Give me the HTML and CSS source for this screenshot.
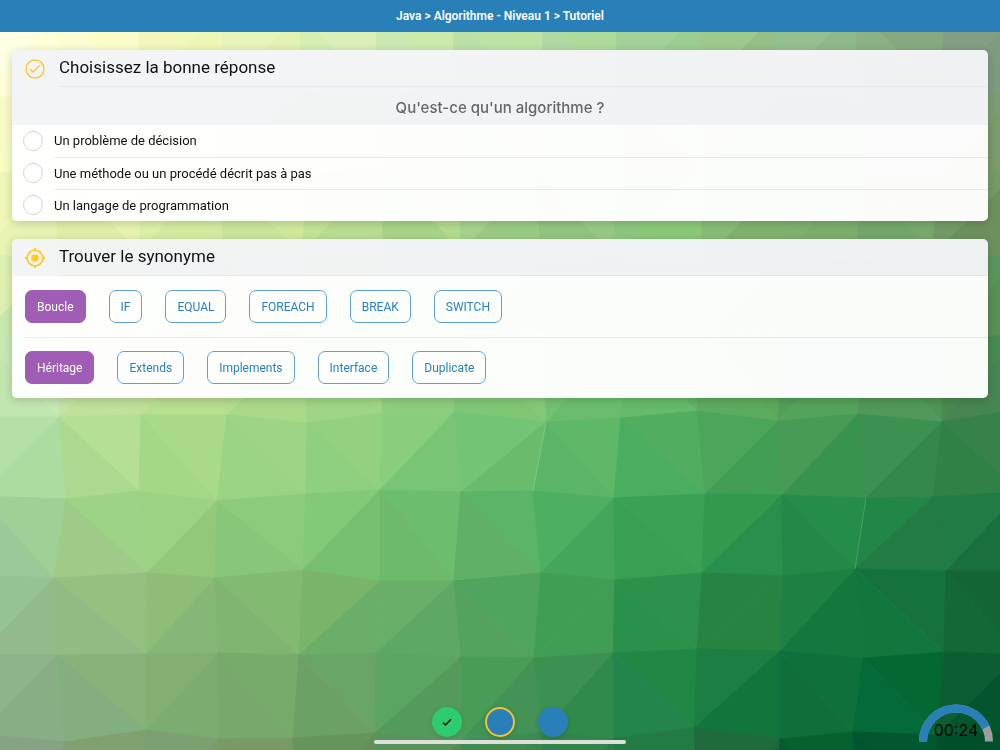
FILE: index.html
```
<!DOCTYPE html>
<html lang="fr">
<head>
  <meta charset="UTF-8" />
  <meta name="viewport" content="width=device-width, initial-scale=1.0" />
  <title>Java - Algorithme - Tutoriel</title>
  <link rel="stylesheet" href="styles.css">
</head>
<body>
  <svg class="background" id="background" viewBox="0 0 1000 750" preserveAspectRatio="xMidYMid slice" aria-hidden="true"></svg>

  <header class="toolbar">
    <h1>Java &gt; Algorithme - Niveau 1 &gt; Tutoriel</h1>
  </header>

  <main class="content">
    <section class="card">
      <div class="card-head">
        <svg class="icon" viewBox="0 0 20 20" aria-hidden="true">
          <circle cx="10" cy="10" r="9" fill="none" stroke="#ffca3a" stroke-width="1.5" />
          <path d="M5.6 10.6 L8.2 13 L14.2 6.8" fill="none" stroke="#ffca3a" stroke-width="1.5" stroke-linecap="round" stroke-linejoin="round" />
        </svg>
        <h2>Choisissez la bonne réponse</h2>
      </div>
      <p class="question" id="question">Qu'est-ce qu'un algorithme ?</p>
      <div class="answers" role="radiogroup" aria-labelledby="question">
        <div class="answer">
          <input type="radio" name="answer" id="a1">
          <label for="a1">Un problème de décision</label>
        </div>
        <div class="answer">
          <input type="radio" name="answer" id="a2">
          <label for="a2">Une méthode ou un procédé décrit pas à pas</label>
        </div>
        <div class="answer">
          <input type="radio" name="answer" id="a3">
          <label for="a3">Un langage de programmation</label>
        </div>
      </div>
    </section>

    <section class="card">
      <div class="card-head">
        <svg class="icon" viewBox="0 0 20 20" aria-hidden="true">
          <circle cx="10" cy="10" r="7.8" fill="none" stroke="#ffca22" stroke-width="1.8" />
          <circle cx="10" cy="10" r="3.8" fill="#ffca22" />
          <path d="M10 0 V3 M10 17 V20 M0 10 H3 M17 10 H20" stroke="#ffca22" stroke-width="1.8" />
        </svg>
        <h2>Trouver le synonyme</h2>
      </div>
      <div class="word-list">
        <div class="words">
          <span class="chip word">Boucle</span>
          <button class="chip">IF</button>
          <button class="chip">EQUAL</button>
          <button class="chip">FOREACH</button>
          <button class="chip">BREAK</button>
          <button class="chip">SWITCH</button>
        </div>
        <div class="words">
          <span class="chip word">Héritage</span>
          <button class="chip">Extends</button>
          <button class="chip">Implements</button>
          <button class="chip">Interface</button>
          <button class="chip">Duplicate</button>
        </div>
      </div>
    </section>
  </main>

  <footer class="footer">
    <div class="progress">
      <div class="steps">
        <button class="step done" aria-label="Étape 1">
          <svg viewBox="0 0 10 10" aria-hidden="true">
            <path d="M1 5.6 L3.4 8 L9 2.2" fill="none" stroke="#000" stroke-width="1.4" />
          </svg>
        </button>
        <button class="step current" aria-label="Étape 2"></button>
        <button class="step" aria-label="Étape 3"></button>
      </div>
      <div class="home-bar"></div>
    </div>
    <div class="timer">
      <svg viewBox="0 0 74 40" aria-hidden="true">
        <path d="M4 37.500 A33 33 0 0 1 70 37.500" fill="none" stroke="#9e9e9e" stroke-width="8" />
        <path d="M4 37.500 A33 33 0 0 1 66.900 23.500" fill="none" stroke="#2980b9" stroke-width="8" />
      </svg>
      <span>00:24</span>
    </div>
  </footer>

  <script src="background.js"></script>
</body>
</html>
```

FILE: styles.css
```
:root {
  --primary: #2980b9;
  --purple: #9f5db5;
  --green: #2ecc71;
  --yellow: #f1c232;
  --line: rgba(0, 0, 0, 0.08);
  --font: Roboto, 'Liberation Sans', sans-serif;
}

* {
  box-sizing: border-box;
  margin: 0;
  padding: 0;
}

body {
  font-family: var(--font);
  color: #111;
  min-height: 100vh;
  display: flex;
  flex-direction: column;
}

button {
  font-family: inherit;
  cursor: pointer;
}

.background {
  position: fixed;
  inset: 0;
  width: 100%;
  height: 100%;
  z-index: -1;
}

.toolbar {
  height: 32px;
  background: var(--primary);
  color: white;
  display: flex;
  align-items: center;
  justify-content: center;
}

.toolbar h1 {
  font-size: 12px;
  font-weight: 600;
}

.content {
  padding: 18px 12px;
  display: flex;
  flex-direction: column;
  gap: 18px;
}

.card {
  border-radius: 5px;
  overflow: hidden;
  box-shadow: 0 2px 10px rgba(0, 0, 0, 0.18);
}

.card-head {
  display: flex;
  align-items: center;
  gap: 14px;
  padding-left: 13px;
  background: rgba(243, 244, 247, 0.97);
}

.icon {
  width: 20px;
  height: 20px;
}

.card-head h2 {
  flex: 1;
  font-size: 17px;
  font-weight: 400;
  line-height: 35px;
  padding-bottom: 1px;
  border-bottom: 1px solid rgba(0, 0, 0, 0.04);
}

.question {
  background: rgba(243, 244, 247, 0.97);
  color: #666;
  font-family: Inter, sans-serif;
  font-size: 15px;
  font-weight: 500;
  line-height: 38px;
  height: 38px;
  padding-top: 2px;
  text-align: center;
}

.answers {
  background: rgba(255, 255, 255, 0.97);
}

.answer {
  display: flex;
  align-items: center;
  gap: 11px;
  padding-left: 11px;
}

.answer input {
  appearance: none;
  width: 20px;
  height: 20px;
  border: 1px solid #d2d2d2;
  border-radius: 50%;
  background: white;
}

.answer input:checked {
  background: var(--primary);
}

.answer label {
  flex: 1;
  font-size: 13px;
  line-height: 32px;
}

.answer + .answer label {
  border-top: 1px solid var(--line);
  line-height: 31px;
}

.word-list {
  padding-left: 12px;
  background: rgba(255, 255, 255, 0.97);
}

.words {
  display: flex;
  flex-wrap: wrap;
  gap: 23px;
  padding: 14px 1px;
}

.words + .words {
  box-shadow: inset 0 1px 0 var(--line);
}

.chip {
  height: 33px;
  padding: 1px 11px 0;
  border: 1px solid #5fa3cd;
  border-radius: 7px;
  background: transparent;
  color: var(--primary);
  font-size: 12px;
  line-height: 31px;
}

.chip.word {
  background: var(--purple);
  border-color: var(--purple);
  color: white;
}

.footer {
  margin-top: auto;
  padding: 0 7px 6px;
  display: grid;
  grid-template-columns: 1fr auto 1fr;
  align-items: end;
}

.progress {
  grid-column: 2;
  display: flex;
  flex-direction: column;
  align-items: center;
  gap: 3px;
}

.steps {
  display: flex;
  gap: 23px;
}

.step {
  width: 30px;
  height: 30px;
  border: none;
  border-radius: 50%;
  background: var(--primary);
  box-shadow: 0 1px 5px rgba(0, 0, 0, 0.15);
  display: flex;
  align-items: center;
  justify-content: center;
}

.step.done {
  background: var(--green);
}

.step.current {
  border: 2px solid var(--yellow);
}

.step svg {
  width: 10px;
  height: 10px;
}

.home-bar {
  width: 252px;
  height: 4px;
  border-radius: 2px;
  background: #dedede;
}

.timer {
  justify-self: end;
  display: grid;
  justify-items: center;
  align-items: end;
}

.timer svg,
.timer span {
  grid-area: 1 / 1;
}

.timer svg {
  width: 74px;
  height: 40px;
}

.timer span {
  font-family: Inter, sans-serif;
  font-size: 16px;
  line-height: 28px;
  color: #000;
}
```

FILE: background.js
```
// low poly background: rows of points, then two colours per cell
const points = [
  [[-20, 12], [62, 8], [140, 14], [222, 10], [300, 12], [378, 8], [453, 14], [544, 10], [616, 12], [700, 10], [776, 14], [855, 8], [945, 12], [1020, 10]],
  [[-20, 97], [55, 97], [138, 90], [222, 98], [302, 92], [374, 96], [455, 88], [540, 95], [618, 97], [701, 92], [778, 88], [859, 98], [940, 94], [1020, 93]],
  [[-20, 174], [60, 170], [144, 176], [216, 170], [308, 174], [382, 168], [458, 176], [537, 172], [620, 176], [702, 168], [786, 174], [858, 170], [937, 176], [1020, 171]],
  [[-20, 255], [56, 258], [139, 252], [226, 260], [302, 254], [383, 258], [462, 252], [541, 260], [612, 256], [702, 264], [785, 256], [858, 262], [933, 254], [1020, 257]],
  [[-20, 338], [62, 334], [143, 340], [218, 332], [306, 338], [382, 334], [458, 340], [545, 332], [622, 336], [702, 330], [784, 336], [863, 332], [943, 338], [1020, 335]],
  [[-20, 417], [59, 417], [141, 415], [227, 415], [307, 423], [382, 413], [454, 412], [546, 422], [621, 418], [697, 411], [778, 421], [858, 414], [942, 422], [1020, 409]],
  [[-20, 496], [66, 499], [139, 491], [217, 501], [306, 494], [380, 490], [461, 492], [533, 491], [614, 498], [705, 494], [782, 495], [866, 498], [933, 497], [1020, 492]],
  [[-20, 575], [54, 578], [147, 573], [215, 578], [303, 570], [380, 581], [454, 581], [541, 573], [615, 580], [702, 573], [783, 576], [855, 569], [946, 571], [1020, 571]],
  [[-20, 655], [57, 655], [146, 654], [218, 653], [299, 655], [376, 653], [461, 657], [534, 658], [613, 653], [697, 649], [780, 651], [863, 658], [944, 652], [1020, 655]],
  [[-20, 734], [64, 742], [146, 730], [219, 739], [293, 738], [375, 733], [462, 741], [543, 732], [614, 738], [694, 728], [780, 739], [853, 732], [937, 735], [1020, 732]],
  [[-20, 815], [60, 815], [142, 815], [222, 815], [300, 815], [378, 815], [458, 815], [540, 815], [618, 815], [700, 815], [780, 815], [860, 815], [940, 815], [1020, 815]]
];

// "/" or "\" is the diagonal of the cell, then upper and lower colour
const cells = [
  '/ffffe4 fefed8|\\fbfdc8 fcfdd2|/f2f8bc eef7b4|/e7f4ba e2f2b2|\\dbf0b8 d6eeb0|\\cceaac cce9b2|\\bde3a4 bce0a8|\\acdb9c b0daa4|/a3d19a 9bce92|/9cca8c 95bf86|/94c08f 8fb98a|\\87a982 8cb184|/819f82 7e9c80',
  '/fafac8 fafcc4|/f6fabc f0f7b4|\\eaf5b0 e8f4b4|/def1ac d6eda8|\\d0eaa8 c8e6a4|/bfe29c b6dd98|\\b2dca0 aad694|/a1d292 98cc8c|\\98c98c 93c486|/8fbe84 88b87c|\\88b47e 82ae78|/82a97a 7da474|/7c9d74 7b9a6c',
  '/eff6b6 e8f4b4|\\e6f4b0 e0f0a8|/dcf0a6 d4eca0|\\d0ea9c c9e69a|/c3e397 b8de90|\\b4da8e a8d488|/a6d28a 9acb82|\\98ca84 90c57e|/8dc77d 8bc97a|/88bd75 80b26e|/7fb170 7cae6c|\\79a96c 74a76a|/749b66 6c915f',
  '/dcefb0 c8e8b0|\\d2eba8 cde8a4|/c6e49c bfe098|\\b9de92 b4da8e|/aedb8c a4d486|\\9dd083 98cc80|/92ca7c 88c476|\\84c173 7fbd70|\\76ba6e 74b66c|/6db068 66aa64|\\64a663 60a260|/5f9d5f 5c985c|/5c945e 589058',
  '\\c6e8b4 c2e6b0|/c6e3a5 bfe19b|/c0e097 b8de90|/b5dd90 a8da8a|\\a1d786 9ed586|/92ce7d 8ecd7d|\\84c976 80c775|/73c173 6bbd6d|\\5fb568 66ba6a|\\5aa95d 5dab5f|/529f59 55a35b|\\4d9556 51985a|/478a50 478553',
  '/b4e0a8 acdca0|\\b4df94 abd990|\\a9da8c a5d789|\\9ed486 9ad383|\\93d180 8ecf80|/89ce7d 79c576|/73c575 68bc6c|\\5eb867 5bb566|\\52ae5f 4bad5f|/4ba65a 429e55|/479b56 37934e|/3c9150 34894a|\\37814b 2f8145',
  '\\a0d095 9bca98|\\9dd287 9fcb89|/9dd284 93c87a|\\8bcb7b 88c67a|/82c978 77bf70|\\6cbd6e 6eb96b|\\5ab566 5eb165|/4eaf61 45a65b|\\3ba155 39a053|/319a4f 298f4a|\\238d49 248848|/228648 217b42|/207c44 19703e',
  '/96c490 92bb89|\\95c07f 91bb85|/8ebd77 86b776|\\82ba71 82b471|/78b56b 6bae68|/69af67 5ea865|\\4fa55d 53a25e|/3f9d56 3f9d56|\\2d914b 2a914a|/278440 278440|/1e8043 13783e|\\15723d 13773d|\\146535 126837',
  '/8db48a 88ae86|\\86b379 83ae7f|/82b071 7dac70|\\77ab6a 78a86c|\\69a566 6ba165|/5ca462 559a5d|/499c57 429355|/3d9150 2f8a4c|\\218745 23854b|/1c7e42 12753c|\\0f703b 106e3c|\\046835 036a38|/0b5d32 02552c',
  '/86a384 86a080|\\80a070 829e78|/7ca070 789c6c|/789b66 749b66|/66955c 62905a|/58935a 4f8c54|/3f8c50 388a4c|/328449 2c7e46|\\217b43 217b43|/1f6b3c 1c6638|\\06612f 045c30|\\02572f 015430|/004f2b 004a28'
];

const svg = document.getElementById('background');

function add(name, attrs) {
  const el = document.createElementNS('http://www.w3.org/2000/svg', name);
  for (const key in attrs) el.setAttribute(key, attrs[key]);
  svg.appendChild(el);
}

cells.forEach((row, r) => {
  row.split('|').forEach((cell, c) => {
    const [upper, lower] = cell.slice(1).split(' ');
    const tl = points[r][c], tr = points[r][c + 1];
    const bl = points[r + 1][c], br = points[r + 1][c + 1];
    const slash = cell[0] === '/';
    const first = slash ? [tl, tr, bl] : [tl, tr, br];
    const second = slash ? [tr, br, bl] : [tl, br, bl];
    add('polygon', { points: first.join(' '), fill: '#' + upper, stroke: '#' + upper, 'stroke-width': 1 });
    add('polygon', { points: second.join(' '), fill: '#' + lower, stroke: '#' + lower, 'stroke-width': 1 });
  });
});

// light seams
add('path', { d: 'M546 422 L533 491', stroke: '#8fd08f', 'stroke-width': 0.7 });
add('path', { d: 'M866 498 L855 569', stroke: '#5cab70', 'stroke-width': 0.7 });
```
